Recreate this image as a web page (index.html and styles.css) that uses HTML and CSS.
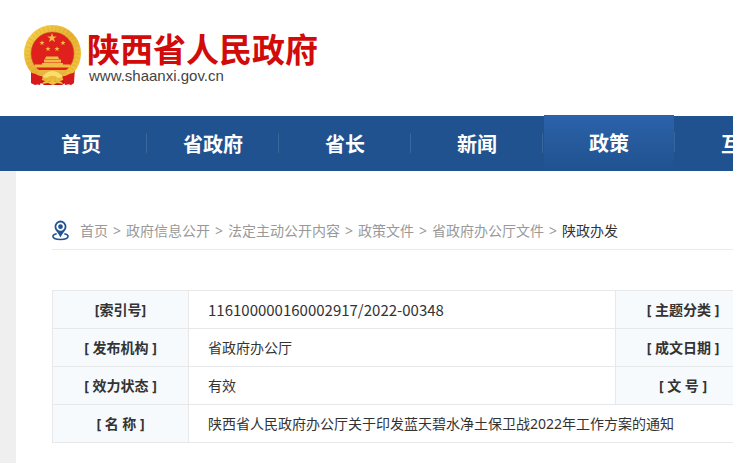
FILE: index.html
```html
<!DOCTYPE html>
<html lang="zh-CN">
<head>
<meta charset="utf-8">
<title>陕西省人民政府</title>
<link rel="stylesheet" href="styles.css">
</head>
<body>
<header class="header">
  <svg class="emblem" viewBox="0 0 60 62" aria-hidden="true">
    <defs>
      <linearGradient id="gold" x1="0" y1="0" x2="1" y2="1">
        <stop offset="0" stop-color="#f6d24a"/>
        <stop offset=".5" stop-color="#e6b133"/>
        <stop offset="1" stop-color="#f3c73b"/>
      </linearGradient>
      <path id="star" d="M0-5 1.2-1.6 4.8-1.6 1.900.6 3 4 0 1.900-3 4-1.900.6-4.800-1.600-1.200-1.600Z"/>
    </defs>
    <path fill="#c91218" d="M8 42 8 59l4 2 6-2 3 2h18l3-2 6 2 3-2 1-17Z"/>
    <circle cx="29.500" cy="29.500" r="25" fill="#e0201d" stroke="url(#gold)" stroke-width="7"/>
    <circle cx="29.500" cy="29.500" r="25" fill="none" stroke="#d49a29" stroke-width="5" stroke-dasharray="1 3" opacity=".35"/>
    <circle cx="29.500" cy="29.500" r="21.500" fill="none" stroke="#bd6a22" stroke-width=".6"/>
    <path fill="#d91a1c" d="M8 49c5 0 8 4 12 3l-3 9-5-1-4-1Zm43 0c-5 0-8 4-12 3l3 9 5-1 4-1Z"/>
    <g fill="#f0bd45">
      <use href="#star" transform="translate(29 14)"/>
      <use href="#star" transform="translate(19 19) scale(.55)"/>
      <use href="#star" transform="translate(40 19) scale(.55)"/>
      <use href="#star" transform="translate(25 25) scale(.55)"/>
      <use href="#star" transform="translate(34 25) scale(.55)"/>
      <path d="M23 32.500h12l1 2.500H22ZM21 35.500h17v3H21ZM19 39h21v1.500h7l1 3H11l1-3h7Z"/>
    </g>
    <path fill="#e9b53a" d="M14 46h31l-3 4c-3 2-6 2-8 1l-4-2-5 2c-3 1-5 1-8-1Z"/>
    <path fill="#f8dd70" d="M22 50c4-4 11-4 15 0l3 3-5 1c-3-3-8-3-11 0l-5-1Z"/>
    <path fill="#efc043" d="M19 60c1-3 5-4 8-2 2-2 3-2 5 0 3-2 7-1 8 2l-6-1-4 2-5-2Z"/>
  </svg>
  <div class="brand">
    <h1 class="brand-name">陕西省人民政府</h1>
    <p class="brand-url">www.shaanxi.gov.cn</p>
  </div>
</header>
<nav class="nav">
  <a class="nav-item" href="#">首页</a>
  <a class="nav-item" href="#">省政府</a>
  <a class="nav-item" href="#">省长</a>
  <a class="nav-item" href="#">新闻</a>
  <a class="nav-item active" href="#">政策</a>
  <a class="nav-item" href="#">互动</a>
</nav>
<main class="content">
  <div class="crumbs">
    <svg class="pin" viewBox="0 0 18 21" aria-hidden="true">
      <path fill="none" stroke="#235391" stroke-width="1.7" d="M5 14C2 14.600 1 15.500 1 16.600 1 18.600 4.500 20 9 20s8-1.400 8-3.400c0-1.100-1-2-4-2.600"/>
      <path fill="#235391" fill-rule="evenodd" d="M9 0a6.300 6.300 0 0 0-6.300 6.500C2.700 10.500 7 13 9 18c2-5 6.300-7.500 6.300-11.500A6.300 6.300 0 0 0 9 0Zm0 2a4.400 4.400 0 1 1 0 8.800A4.400 4.400 0 0 1 9 2Z"/>
      <circle cx="9" cy="6.500" r="2.500" fill="#235391"/>
    </svg>
    <a href="#">首页</a><span>&gt;</span>
    <a href="#">政府信息公开</a><span>&gt;</span>
    <a href="#">法定主动公开内容</a><span>&gt;</span>
    <a href="#">政策文件</a><span>&gt;</span>
    <a href="#">省政府办公厅文件</a><span>&gt;</span>
    <a class="current" href="#">陕政办发</a>
  </div>
  <table class="info">
    <colgroup><col class="label-col"><col><col class="label-col"><col></colgroup>
    <tr><th scope="row">[索引号]</th><td class="code">116100000160002917/2022-00348</td><th scope="row">[ 主题分类 ]</th><td></td></tr>
    <tr><th scope="row">[ 发布机构 ]</th><td>省政府办公厅</td><th scope="row">[ 成文日期 ]</th><td></td></tr>
    <tr><th scope="row">[ 效力状态 ]</th><td>有效</td><th scope="row">[ 文 号 ]</th><td></td></tr>
    <tr><th scope="row">[ 名 称 ]</th><td colspan="3">陕西省人民政府办公厅关于印发蓝天碧水净土保卫战2022年工作方案的通知</td></tr>
  </table>
</main>
</body>
</html>
```
FILE: styles.css
```css
* {
  box-sizing: border-box;
}

body {
  margin: 0;
  min-height: 100vh;
  display: flex;
  flex-direction: column;
  overflow: hidden;
  background: #efefef;
  color: #333;
  font: 14px/20px "Noto Sans", "Noto Sans CJK SC", sans-serif;
}

a {
  color: inherit;
  text-decoration: none;
}

.header {
  display: flex;
  gap: 4px;
  padding: 24px 23px 30px;
  background: #fff;
}

.emblem {
  width: 60px;
  height: 62px;
}

.brand {
  padding-top: 6px;
}

.brand-name {
  margin: 0;
  color: #d00b09;
  font: bold 33px/36px "Noto Sans CJK SC", sans-serif;
}

.brand-url {
  margin: 0 2px;
  color: #444;
  font: 15px/20px "Liberation Sans", sans-serif;
}

.nav {
  display: flex;
  height: 55px;
  padding-left: 15px;
  background: #20528f;
}

.nav-item {
  position: relative;
  flex: 0 0 132px;
  color: #fff;
  font: bold 20px/56px "Noto Sans CJK SC", sans-serif;
  text-align: center;
}

.nav-item::after {
  content: "";
  position: absolute;
  top: 17px;
  right: 0;
  width: 1px;
  height: 20px;
  background: #3a659b;
}

.nav-item.active {
  margin-top: -1px;
  background: linear-gradient(#2b62aa, #20528f) 1px 0 / 130px 100% no-repeat;
}

.content {
  flex: 1;
  margin-left: 16px;
  padding: 50px 0 20px 36px;
  background: #fff;
}

.crumbs {
  display: flex;
  align-items: center;
  gap: 5px;
  height: 29px;
  padding-bottom: 9px;
  margin-bottom: 40px;
  border-bottom: 1px solid #ebebeb;
  color: #999;
  white-space: nowrap;
}

.pin {
  width: 17px;
  height: 21px;
  margin-right: 6px;
}

.current {
  color: #333;
}

.info {
  width: 1126px;
  table-layout: fixed;
  border-collapse: collapse;
}

.label-col {
  width: 136px;
}

.info th,
.info td {
  height: 38px;
  padding: 0 19px;
  border: 1px solid #e6e8ea;
  text-align: left;
}

.info th {
  padding: 0;
  background: #f6fafd;
  text-align: center;
}

.info .code {
  font: 15px/20px "Noto Sans CJK SC", sans-serif;
}
```
